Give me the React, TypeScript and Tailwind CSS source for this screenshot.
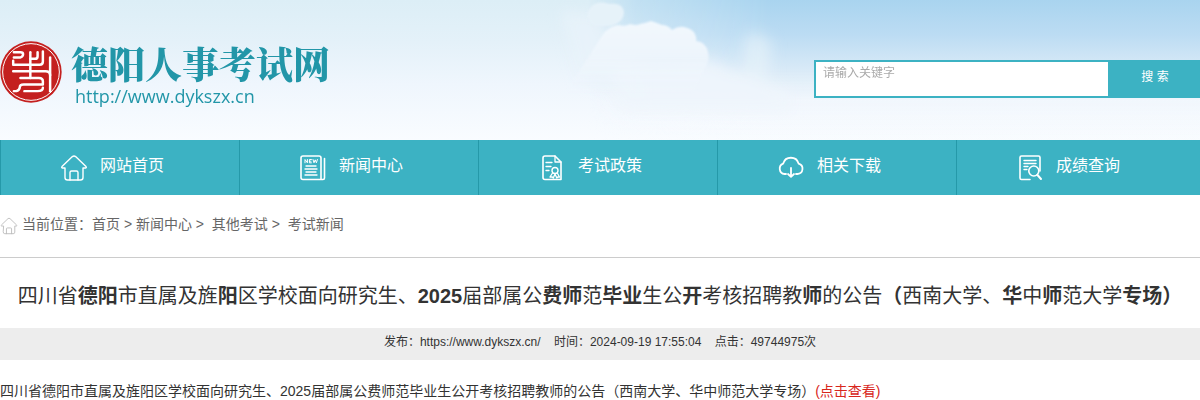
import React from 'react';

const navItems = [
  { label: '网站首页', icon: <HomeIcon className="w-7 h-7" /> },
  { label: '新闻中心', icon: <NewsIcon /> },
  { label: '考试政策', icon: <PolicyIcon /> },
  { label: '相关下载', icon: <DownloadIcon /> },
  { label: '成绩查询', icon: <ScoreIcon /> },
];

const crumbs = [
  { label: '首页', gap: '\u00a0>\u00a0' },
  { label: '新闻中心', gap: '\u00a0>\u00a0\u00a0' },
  { label: '其他考试', gap: '\u00a0>\u00a0\u00a0' },
];

// [text, bold]
const titleParts: [string, boolean][] = [
  ['四川省', false],
  ['德阳', true],
  ['市直属及旌', false],
  ['阳', true],
  ['区学校面向研究生、', false],
  ['2025', true],
  ['届部属公', false],
  ['费师', true],
  ['范', false],
  ['毕业', true],
  ['生公', false],
  ['开', true],
  ['考核招聘教', false],
  ['师', true],
  ['的公告', false],
  ['（', true],
  ['西南大学、', false],
  ['华', true],
  ['中', false],
  ['师', true],
  ['范大学', false],
  ['专场）', true],
];

function HomeIcon({ className }: { className: string }) {
  return (
    <svg viewBox="0 0 28 28" fill="none" stroke="currentColor" strokeWidth="1.4" strokeLinecap="round" strokeLinejoin="round" className={className}>
      <path d="M5 14H2.4Q1.2 13.6 2 12.6L12.4 2.6Q14 1.2 15.6 2.6L26 12.6Q26.8 13.6 25.6 14H23V23.5Q23 26 20.5 26H7.5Q5 26 5 23.5Z" />
      <path d="M10 26V18.5Q10 17 11.5 17H16.5Q18 17 18 18.5V26" />
    </svg>
  );
}

function NewsIcon() {
  return (
    <svg viewBox="0 0 28 28" fill="none" stroke="currentColor" strokeWidth="1.6" strokeLinecap="round" strokeLinejoin="round" className="w-7 h-7">
      <path d="M22 4V25.5H4Q2 25.5 2 23.5V4Q2 2 4 2H20Q22 2 22 4ZM22 25.5H24Q25.5 25.5 25.5 24V4.5" />
      <path d="M7 12H17M6 15H18M7 18H17M6 21H18" strokeWidth="1.3" />
      <path d="M6 8.8V5.5L8.4 8.8V5.5M12.4 5.5H10.4V8.8H12.4M10.4 7.2H12M14 5.5L15 8.8 16.2 5.8 17.4 8.8 18.4 5.5" strokeWidth="1" />
    </svg>
  );
}

function PolicyIcon() {
  return (
    <svg viewBox="0 0 28 28" fill="none" stroke="currentColor" strokeWidth="1.6" strokeLinecap="round" strokeLinejoin="round" className="w-7 h-7">
      <path d="M17 2H7Q5 2 5 4V23.5Q5 25.5 7 25.5H23V8Z" />
      <path d="M17 2V8H23" strokeWidth="1.3" />
      <path d="M8 8.5H14M8 12.5H13M8 16.5H11" strokeWidth="1.3" />
      <circle cx="17" cy="16.5" r="3" strokeWidth="1.4" />
      <path d="M14.5 19L12 23H14.3L15.3 24 17 20 18.8 24 19.8 23H21.5L19.3 19" strokeWidth="1.3" />
    </svg>
  );
}

function DownloadIcon() {
  return (
    <svg viewBox="0 0 28 28" fill="none" stroke="currentColor" strokeWidth="1.8" strokeLinecap="round" strokeLinejoin="round" className="w-7 h-7">
      <path d="M9 20H7.5A5.4 5.4 0 0 1 6.2 9.6A8 8 0 0 1 21.6 9.6A5.3 5.3 0 0 1 20.5 20H19" />
      <path d="M14 14V22.5M11 20L14 22.8 17 20" />
    </svg>
  );
}

function ScoreIcon() {
  return (
    <svg viewBox="0 0 28 28" fill="none" stroke="currentColor" strokeWidth="1.6" strokeLinecap="round" strokeLinejoin="round" className="w-7 h-7">
      <path d="M14 25.5H5.5Q4 25.5 4 24V3.5Q4 2 5.5 2H22.5Q24 2 24 3.5V17" />
      <path d="M8 6.5H20M8 9.5H20M8 12.5H12M8 15.5H11" strokeWidth="1.4" />
      <circle cx="17.8" cy="17" r="5" />
      <path d="M21.5 21L25 25" strokeWidth="2" />
    </svg>
  );
}

function Seal() {
  return (
    <svg viewBox="0 0 188 188" fill="none" className="w-[62px] h-[62px] shrink-0">
      <circle cx="94" cy="94" r="93" fill="#c4201f" />
      <circle cx="94" cy="94" r="86" stroke="#fff" strokeWidth="3" />
      <g stroke="#fff" strokeWidth="7.5" strokeLinecap="round" strokeLinejoin="round">
        <path d="M42 34H62Q70 34 70 40T62 50H42" />
        <path d="M92 34V112" />
        <path d="M114 34V46Q114 54 106 54H92" />
        <path d="M130 32V62Q130 72 120 72H42" />
        <path d="M152 50V152" />
        <path d="M40 60V72M40 92H138Q152 92 152 104" />
        <path d="M62 112H118Q130 112 130 122V132H72Q60 132 60 140T50 152H42" />
        <path d="M74 152H114Q130 152 130 142" />
      </g>
    </svg>
  );
}

function Sky() {
  return (
    <svg viewBox="0 0 1200 140" preserveAspectRatio="xMidYMid slice" aria-hidden="true" className="absolute inset-0 w-full h-full">
      <defs>
        <linearGradient id="haze" x1="0" y1="0" x2="0" y2="1">
          <stop offset="0" stopColor="#dceef6" />
          <stop offset="0.3" stopColor="#e4f1f9" />
          <stop offset="0.6" stopColor="#eff6fd" />
          <stop offset="1" stopColor="#f9fcff" />
        </linearGradient>
        <linearGradient id="blue" x1="0" y1="0" x2="0" y2="1">
          <stop offset="0" stopColor="#a9d4ef" />
          <stop offset="0.25" stopColor="#bcdcf3" />
          <stop offset="0.5" stopColor="#d9eaf7" />
          <stop offset="0.72" stopColor="#f1f6fc" stopOpacity="0.8" />
          <stop offset="1" stopColor="#f9fcff" stopOpacity="0" />
        </linearGradient>
        <linearGradient id="fadeX" x1="0" y1="0" x2="1" y2="0">
          <stop offset="0.49" stopColor="#000" />
          <stop offset="0.53" stopColor="#888" />
          <stop offset="0.64" stopColor="#fff" />
        </linearGradient>
        <linearGradient id="cloud" x1="0" y1="0" x2="0" y2="1">
          <stop offset="0" stopColor="#f2f8fd" />
          <stop offset="0.4" stopColor="#eef5fc" />
          <stop offset="0.95" stopColor="#f2f8fd" stopOpacity="0" />
        </linearGradient>
        <mask id="right"><rect width="1200" height="140" fill="url(#fadeX)" /></mask>
        <filter id="soft" x="-30%" y="-30%" width="160%" height="160%"><feGaussianBlur stdDeviation="7" /></filter>
        <filter id="edge"><feGaussianBlur stdDeviation="0.8" /></filter>
      </defs>
      <rect width="1200" height="140" fill="url(#haze)" />
      <rect width="1200" height="140" fill="url(#blue)" mask="url(#right)" />
      <g filter="url(#soft)">
        <path d="M560 10L600 16 614 50 640 60V100L580 80Z" fill="#e8f3fa" opacity="0.8" />
        <path d="M744 38L752 32 772 40 770 80 742 84Z" fill="#e9f3fa" opacity="0.6" />
        <path d="M610 64L710 60 750 78 790 92V110H620Z" fill="#eef5fc" opacity="0.9" />
      </g>
      <path d="M592 6Q598 0 610 4Q624 2 624 14Q622 24 610 26H594Q582 16 592 6Z" fill="#e6f2f9" filter="url(#edge)" />
      <path d="M602 36Q608 26 619 25Q625 27 630 24Q636 26 640 24Q646 23 651 21Q657 23 662 25Q668 25 672 30Q678 26 684 27Q693 29 695 34Q697 39 696 41Q706 42 708 52Q710 60 706 66L690 100H560Q580 70 602 36Z" fill="url(#cloud)" filter="url(#edge)" />
    </svg>
  );
}

const App = () => {
  return (
    <div className="bg-white text-[#333] font-['Liberation_Sans','Noto_Sans_CJK_SC',sans-serif]">
      <header className="relative h-[140px]">
        <Sky />
        <div className="relative flex justify-between">
          <a href="#" className="flex pt-[41px] gap-[9px] text-[#2296a8]">
            <Seal />
            <span className="flex flex-col">
              <span className="text-[37px] leading-[44px] font-black font-['Noto_Serif_CJK_SC','Noto_Sans_CJK_SC',serif]">德阳人事考试网</span>
              <span className="pl-1 text-[18px] leading-[22px] font-['Open_Sans',sans-serif]">http://www.dykszx.cn</span>
            </span>
          </a>
          <form className="flex mt-[60px] h-[38px]" onSubmit={(e) => e.preventDefault()}>
            <input
              type="text"
              aria-label="请输入关键字"
              placeholder="请输入关键字"
              className="w-[296px] border-2 border-[#3cb2c3] bg-white pl-[7px] pb-3 text-[12px] outline-none placeholder:text-[#aaa]"
            />
            <button type="submit" className="w-[90px] bg-[#3cb2c3] text-white text-[12px] leading-[18px] pb-1">搜 索</button>
          </form>
        </div>
      </header>

      <nav className="bg-[#3cb2c3] pr-[5px] grid grid-cols-5">
        {navItems.map((item) => (
          <a key={item.label} href="#" className="h-[55px] flex items-center gap-3 pl-[59px] border-l border-[#2599a9] text-white text-[16px]">
            {item.icon}
            <span className="leading-6 pb-1">{item.label}</span>
          </a>
        ))}
      </nav>

      <div className="h-[63px] flex items-center gap-1 border-b border-[#ccc] text-[14px] text-[#666]">
        <HomeIcon className="w-[18px] h-[18px] text-[#bbb]" />
        <p className="leading-5 pb-1">
          当前位置：
          {crumbs.map((c) => (
            <React.Fragment key={c.label}>
              <a href="#">{c.label}</a>{c.gap}
            </React.Fragment>
          ))}
          <a href="#">考试新闻</a>
        </p>
      </div>

      <main>
        <h1 className="h-[70px] pt-[23px] text-center text-[20px] leading-[30px]">
          {titleParts.map(([text, bold], i) =>
            bold ? <b key={i}>{text}</b> : <span key={i}>{text}</span>
          )}
        </h1>
        <div className="h-8 bg-[#ededed] text-center text-[12px] leading-7">
          发布：https://www.dykszx.cn/&nbsp;&nbsp;&nbsp; 时间：2024-09-19 17:55:04&nbsp;&nbsp;&nbsp; 点击：49744975次
        </div>
        <p className="pt-[21px] text-[14px] leading-5">
          四川省德阳市直属及旌阳区学校面向研究生、2025届部属公费师范毕业生公开考核招聘教师的公告（西南大学、华中师范大学专场）
          <a href="#" className="text-[#d8261c]">(点击查看)</a>
        </p>
      </main>
    </div>
  );
};

export default App;
